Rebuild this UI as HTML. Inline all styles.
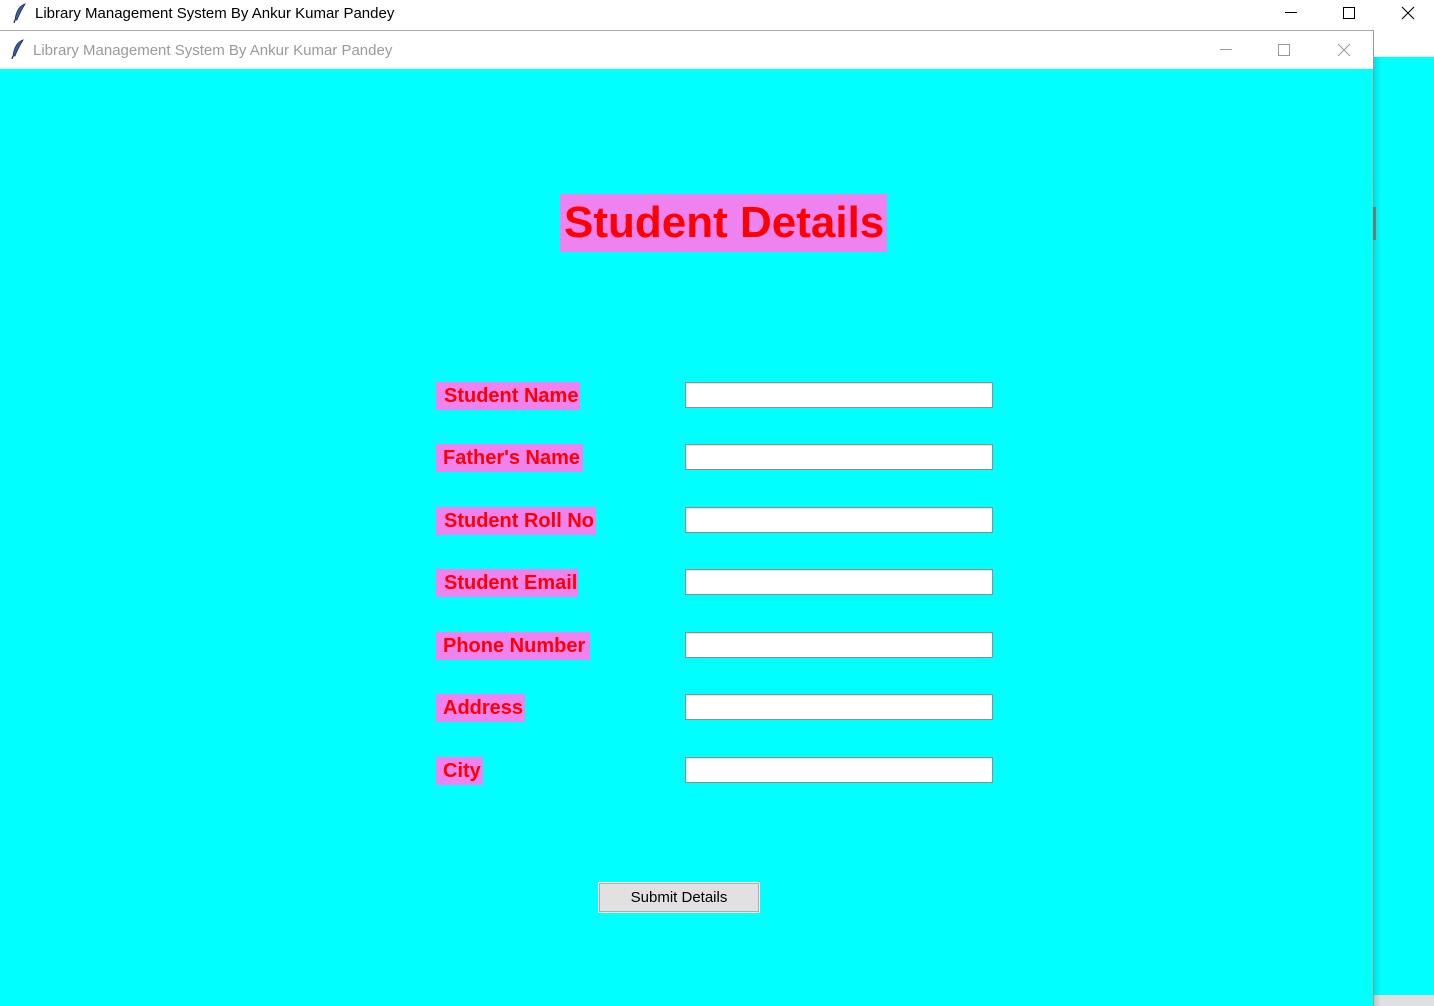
<!DOCTYPE html>
<html><head><meta charset="utf-8"><style>
*{margin:0;padding:0;box-sizing:border-box}
body{width:1434px;height:1006px;position:relative;overflow:hidden;background:#fff;font-family:"Liberation Sans",Arial,sans-serif}
.a{position:absolute}
.t1{font-family:"Liberation Sans",Arial,sans-serif;font-size:15px}
.lbl{position:absolute;left:436px;height:28px;background:#ee82ee;color:#ff0000;font-weight:bold;font-size:20px;line-height:28px;padding-left:8px;white-space:nowrap}
.ent{position:absolute;left:685px;width:308px;height:26px;background:#fff;border:1px solid #8e8e8e;box-shadow:inset 1px 1px 0 #e3e3e3}
</style></head><body>
<div class="a" style="left:0;top:0;width:1434px;height:57px;background:#fff"></div>
<div class="a" style="left:1373px;top:57px;width:61px;height:938px;background:#00ffff"></div>
<div class="a" style="left:1373px;top:995px;width:61px;height:11px;background:#e0e0e0"></div>
<div class="a" style="left:1373px;top:57px;width:8px;height:949px;background:linear-gradient(90deg,rgba(0,0,0,.15),rgba(0,0,0,0))"></div>
<svg class="a" style="left:12px;top:3px" width="16" height="20" viewBox="0 0 16 20"><path d="M13 1 C7 3 4 9 3 17 L5 17 C7 11 10 6 13 1Z" fill="#3b5fa8" stroke="#1a2a55" stroke-width="0.8"/><path d="M3 17 L2 20" stroke="#222" stroke-width="1.2"/></svg>
<div class="a t1" style="left:35px;top:5px;color:#000">Library Management System By Ankur Kumar Pandey</div>
<div class="a" style="left:1285px;top:12px;width:12px;height:1px;background:#000"></div>
<div class="a" style="left:1343px;top:7px;width:12px;height:12px;border:1px solid #000"></div>
<svg class="a" style="left:1401px;top:6px" width="14" height="14"><path d="M1 1L13 13M13 1L1 13" stroke="#000" stroke-width="1.1"/></svg>
<div class="a" style="left:0;top:30px;width:1374px;height:976px;border-top:1px solid #aaa;border-right:1px solid #999;background:#00ffff"></div>
<div class="a" style="left:0;top:31px;width:1373px;height:38px;background:#fff"></div>
<div class="a" style="left:1373px;top:207px;width:3px;height:33px;background:#777"></div>
<svg class="a" style="left:10px;top:39px" width="16" height="20" viewBox="0 0 16 20"><path d="M13 1 C7 3 4 9 3 17 L5 17 C7 11 10 6 13 1Z" fill="#3b5fa8" stroke="#1a2a55" stroke-width="0.8"/><path d="M3 17 L2 20" stroke="#222" stroke-width="1.2"/></svg>
<div class="a t1" style="left:33px;top:42px;color:#9a9a9a">Library Management System By Ankur Kumar Pandey</div>
<div class="a" style="left:1220px;top:49px;width:12px;height:1px;background:#999"></div>
<div class="a" style="left:1278px;top:44px;width:12px;height:12px;border:1px solid #999"></div>
<svg class="a" style="left:1337px;top:43px" width="14" height="14"><path d="M1 1L13 13M13 1L1 13" stroke="#999" stroke-width="1"/></svg>
<div class="a" style="left:560px;top:194px;width:327px;height:58px;background:#ee82ee;color:#ff0000;font-weight:bold;font-size:44px;line-height:58px;padding-left:4px;white-space:nowrap">Student Details</div>
<div class="lbl" style="top:382px;width:144px">Student Name</div>
<div class="lbl" style="top:444px;width:147px;padding-left:7px">Father's Name</div>
<div class="lbl" style="top:507px;width:160px">Student Roll No</div>
<div class="lbl" style="top:569px;width:142px">Student Email</div>
<div class="lbl" style="top:632px;width:154px;padding-left:7px">Phone Number</div>
<div class="lbl" style="top:694px;width:89px;padding-left:7px">Address</div>
<div class="lbl" style="top:757px;width:47px;padding-left:7px">City</div>
<div class="ent" style="top:382px"></div>
<div class="ent" style="top:444px"></div>
<div class="ent" style="top:507px"></div>
<div class="ent" style="top:569px"></div>
<div class="ent" style="top:632px"></div>
<div class="ent" style="top:694px"></div>
<div class="ent" style="top:757px"></div>
<div class="a t1" style="left:598px;top:882px;width:162px;height:31px;background:#e1e1e1;border:1px solid #fff;outline:1px solid #adadad;outline-offset:-2px;text-align:center;line-height:30px;color:#000;font-size:15px">Submit Details</div>
</body></html>
